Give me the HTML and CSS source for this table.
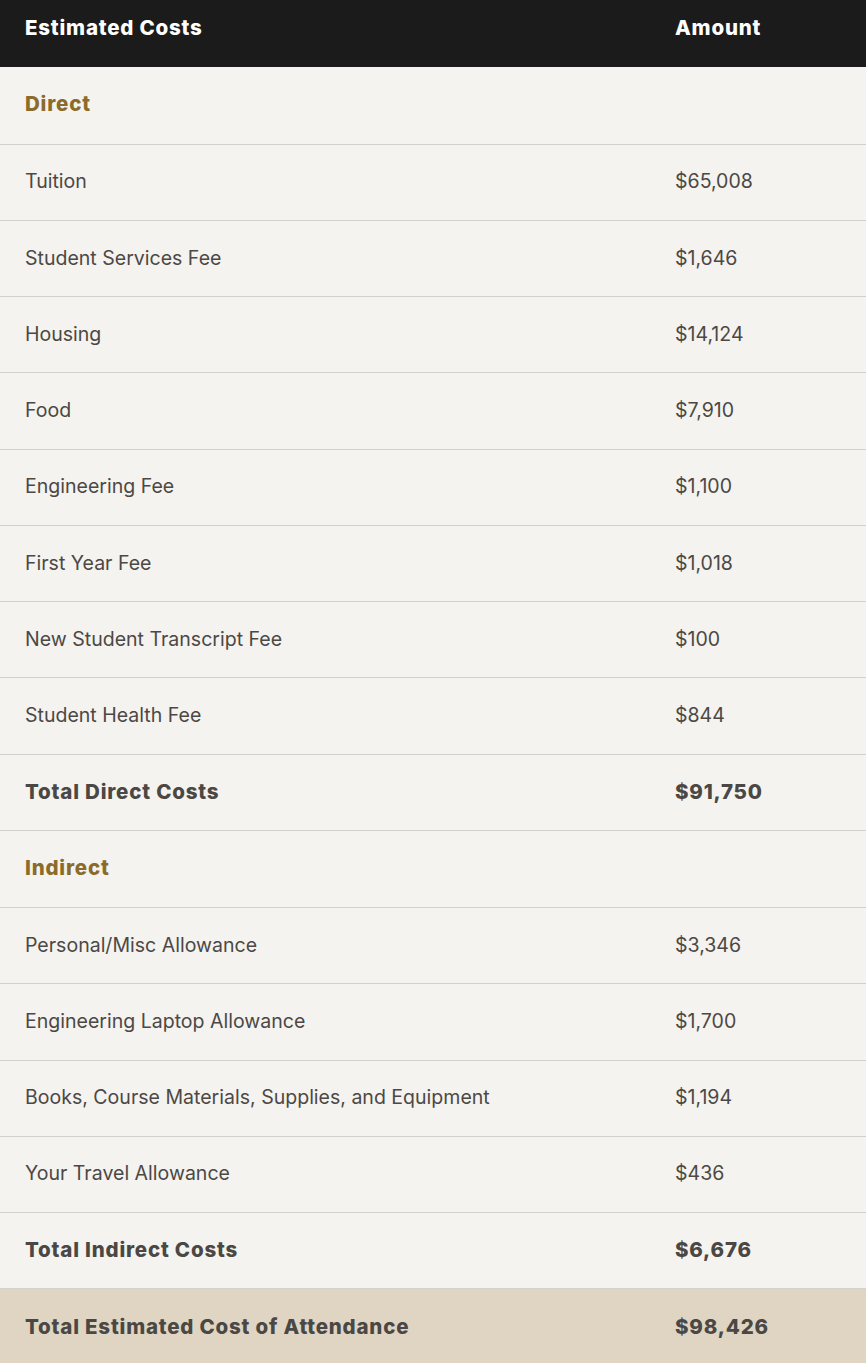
FILE: index.html
```html
<!DOCTYPE html>
<html lang="en">
<head>
<meta charset="utf-8">
<title>Estimated Costs</title>
<link rel="stylesheet" href="styles.css">
</head>
<body>
<table class="costs">
  <thead>
    <tr><th>Estimated Costs</th><th>Amount</th></tr>
  </thead>
  <tbody>
    <tr class="section"><td>Direct</td><td></td></tr>
    <tr><td>Tuition</td><td>$65,008</td></tr>
    <tr><td>Student Services Fee</td><td>$1,646</td></tr>
    <tr><td>Housing</td><td>$14,124</td></tr>
    <tr><td>Food</td><td>$7,910</td></tr>
    <tr><td>Engineering Fee</td><td>$1,100</td></tr>
    <tr><td>First Year Fee</td><td>$1,018</td></tr>
    <tr><td>New Student Transcript Fee</td><td>$100</td></tr>
    <tr><td>Student Health Fee</td><td>$844</td></tr>
    <tr class="total"><td>Total Direct Costs</td><td>$91,750</td></tr>
    <tr class="section"><td>Indirect</td><td></td></tr>
    <tr><td>Personal/Misc Allowance</td><td>$3,346</td></tr>
    <tr><td>Engineering Laptop Allowance</td><td>$1,700</td></tr>
    <tr><td>Books, Course Materials, Supplies, and Equipment</td><td>$1,194</td></tr>
    <tr><td>Your Travel Allowance</td><td>$436</td></tr>
    <tr class="total"><td>Total Indirect Costs</td><td>$6,676</td></tr>
    <tr class="total grand"><td>Total Estimated Cost of Attendance</td><td>$98,426</td></tr>
  </tbody>
</table>
</body>
</html>
```
FILE: styles.css
```css
html, body {
  margin: 0;
  padding: 0;
  background: #f4f3ef;
}
.costs {
  width: 866px;
  border-collapse: collapse;
  font-family: Inter, "Liberation Sans", Arial, sans-serif;
  font-size: 19.55px;
  color: #4c4845;
}
.costs th {
  background: #1b1b1b;
  color: #ffffff;
  font-weight: 800;
  text-align: left;
  height: 67px;
  padding: 0 0 12px 25px;
  box-sizing: border-box;
  font-size: 20.5px;
  letter-spacing: 0.8px;
}
.costs th:last-child,
.costs td:last-child {
  width: 191px;
  padding-left: 0;
}
.costs td {
  height: 76.24px;
  box-sizing: border-box;
  padding: 0 0 0 25px;
  border-top: 1px solid #d3d1cc;
  vertical-align: middle;
  padding-bottom: 2px;
}
.costs tbody tr:first-child td {
  border-top: none;
}
.costs .section td {
  color: #8b6b2b;
  font-weight: 800;
  font-size: 20.5px;
  letter-spacing: 0.8px;
  padding-bottom: 3px;
  height: 77.24px;
}
.costs .total td {
  font-weight: 800;
  font-size: 20.5px;
  letter-spacing: 0.8px;
  color: #4a4744;
}
.costs .grand td {
  background: #dfd5c2;
}
```
